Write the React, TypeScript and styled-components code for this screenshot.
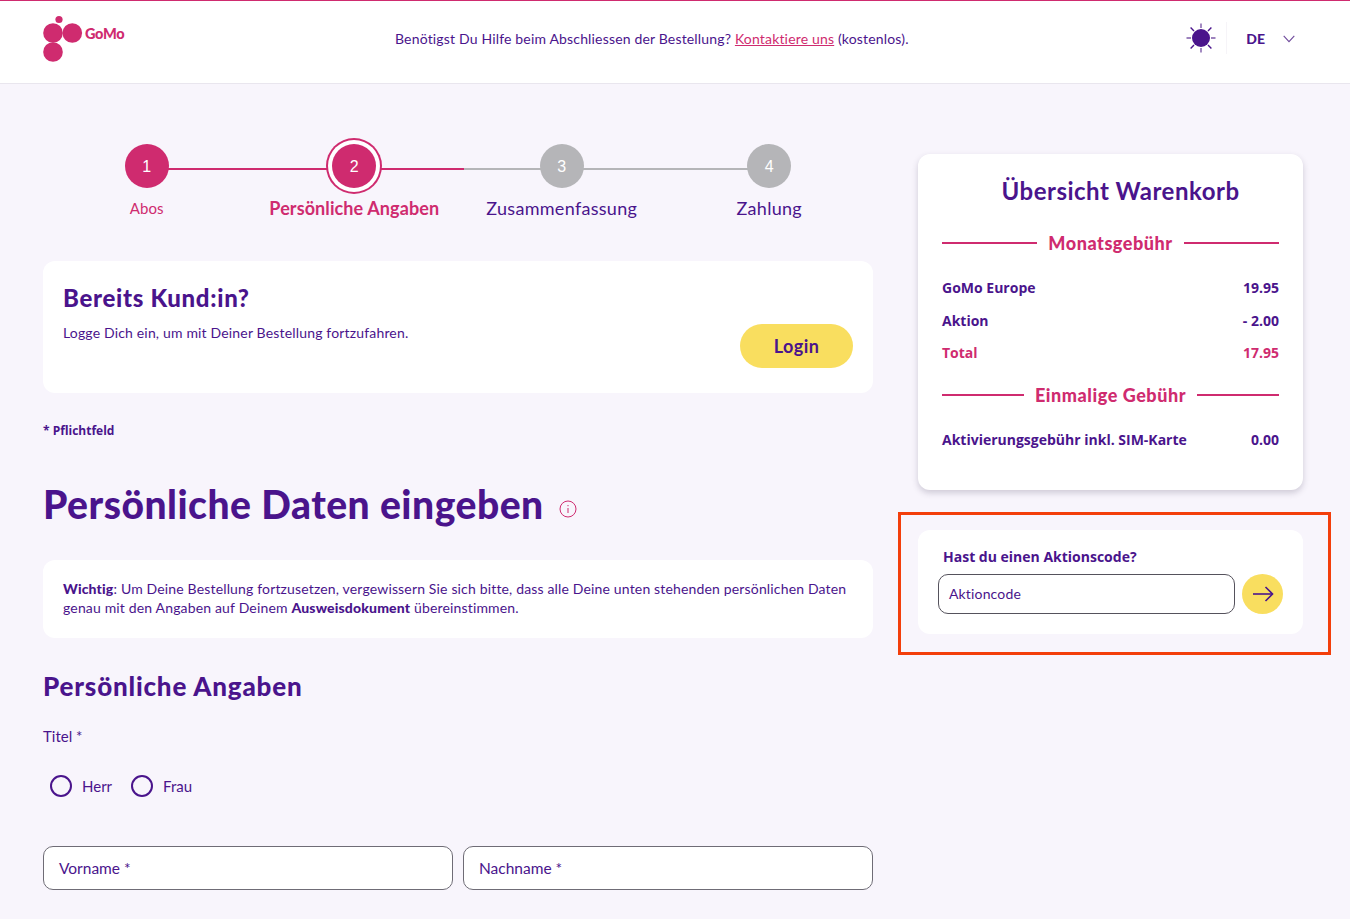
import * as React from "react";
import styled, { createGlobalStyle } from "styled-components";

const PURPLE = "#4a148c";
const PINK = "#cf2b6f";
const YELLOW = "#f9de5f";
const PAGE_BG = "#f8f5fc";
const BODY_FONT = '"Lato", "Liberation Sans", sans-serif';
const ORDER_FONT = '"Open Sans", "Liberation Sans", sans-serif';

const GlobalStyle = createGlobalStyle`
  html, body {
    margin: 0;
    padding: 0;
  }
  body {
    background: ${PAGE_BG};
    color: ${PURPLE};
    font-family: ${BODY_FONT};
  }
  * {
    box-sizing: border-box;
  }
`;

const Page = styled.div`
  height: 919px;
  overflow: hidden;
`;

const Header = styled.header`
  display: flex;
  align-items: center;
  height: 84px;
  padding: 0 55px 8px 43px;
  background: #fff;
  border-top: 1px solid ${PINK};
  border-bottom: 1px solid #e9e6ee;
`;

const LogoWrap = styled.div`
  display: flex;
  align-items: flex-start;
  width: 352px;
  height: 52px;
`;

const LogoText = styled.span`
  margin: 13px 0 0;
  font-size: 14.5px;
  font-weight: 900;
  letter-spacing: -0.3px;
  color: ${PINK};
`;

const HelpText = styled.p`
  margin: 0;
  font-size: 14px;
  letter-spacing: 0.17px;

  a {
    color: ${PINK};
    text-decoration: underline;
  }
`;

const HeaderTools = styled.div`
  display: flex;
  align-items: center;
  margin-left: auto;
`;

const SunBox = styled.div`
  display: flex;
  align-items: center;
  height: 32px;
  padding-right: 10px;
  border-right: 1px solid #f6f4f8;
`;

const LangCode = styled.span`
  margin: 0 18px 0 19px;
  font-size: 14px;
  font-weight: 900;
`;

const ChevronSvg = styled.svg`
  margin-top: 2px;
`;

const Main = styled.main`
  display: grid;
  grid-template-columns: 830px 385px;
  column-gap: 45px;
  padding-left: 43px;
`;

const LeftColumn = styled.div`
  padding-top: 60px;
`;

const RightColumn = styled.aside`
  padding-top: 70px;
`;

const Stepper = styled.ol`
  display: grid;
  grid-template-columns: repeat(4, 1fr);
  height: 117px;
  margin: 0;
  padding: 0;
  list-style: none;
`;

const Step = styled.li<{ $line?: string; $half?: string }>`
  position: relative;
  display: flex;
  flex-direction: column;
  align-items: center;

  &::before {
    content: "";
    display: ${(p) => (p.$line ? "block" : "none")};
    position: absolute;
    top: 24px;
    left: 50%;
    width: 100%;
    height: 2px;
    background: ${(p) =>
      p.$half
        ? `linear-gradient(to right, ${p.$half} 53%, ${p.$line} 53%)`
        : p.$line};
  }
`;

const StepCircle = styled.div<{ $state: "done" | "active" | "todo" }>`
  position: relative;
  z-index: 1;
  display: flex;
  align-items: center;
  justify-content: center;
  width: 44px;
  height: 44px;
  padding-top: 2px;
  border-radius: 50%;
  font-family: "Liberation Sans", sans-serif;
  font-size: 16px;
  color: #fff;
  background: ${(p) => (p.$state === "todo" ? "#b5b5b8" : PINK)};
  box-shadow: ${(p) =>
    p.$state === "active" ? `0 0 0 4px #fff, 0 0 0 6px ${PINK}` : "none"};
`;

const StepLabel = styled.span<{ $small?: boolean; $color?: string; $bold?: boolean }>`
  margin-top: ${(p) => (p.$small ? "11px" : "9px")};
  font-size: ${(p) => (p.$small ? "15px" : "18px")};
  font-weight: ${(p) => (p.$bold ? 700 : 400)};
  letter-spacing: ${(p) => (p.$bold || p.$small ? "0.1px" : "0.3px")};
  color: ${(p) => p.$color || PURPLE};
  white-space: nowrap;
`;

const Card = styled.section`
  background: #fff;
  border-radius: 12px;
`;

const LoginCard = styled(Card)`
  display: flex;
  justify-content: space-between;
  height: 132px;
  padding: 22px 20px 0;
`;

const CardTitle = styled.h3`
  margin: 0 0 12px;
  font-size: 24px;
  font-weight: 900;
  letter-spacing: 0.7px;
`;

const CardText = styled.p`
  margin: 0;
  font-size: 14px;
  letter-spacing: 0.17px;
`;

const LoginButton = styled.button`
  align-self: flex-start;
  width: 113px;
  height: 44px;
  margin-top: 41px;
  border: 0;
  border-radius: 22px;
  background: ${YELLOW};
  color: ${PURPLE};
  font-family: ${BODY_FONT};
  font-size: 18px;
  font-weight: 700;
  letter-spacing: 0.4px;
`;

const Required = styled.p`
  margin: 29px 0 0;
  font-family: ${ORDER_FONT};
  font-size: 12px;
  font-weight: 700;
`;

const TitleRow = styled.div`
  display: flex;
  align-items: center;
  gap: 15px;
  margin-top: 40px;
`;

const PageTitle = styled.h1`
  margin: 0;
  font-size: 39px;
  line-height: 50px;
  font-weight: 900;
  letter-spacing: 0.5px;
`;

const InfoSvg = styled.svg`
  margin-top: 10px;
`;

const NoticeCard = styled(Card)`
  height: 78px;
  margin-top: 31px;
  padding: 19px 20px 0;
  font-size: 14px;
  line-height: 19px;
  letter-spacing: 0.16px;

  b {
    font-weight: 900;
  }
`;

const SectionTitle = styled.h2`
  margin: 32px 0 0;
  font-size: 26px;
  line-height: 32px;
  font-weight: 900;
  letter-spacing: 0.8px;
`;

const FieldLabel = styled.div`
  margin-top: 24px;
  font-size: 15px;
  line-height: 20px;
`;

const RadioRow = styled.div`
  display: flex;
  align-items: center;
  gap: 19px;
  margin: 29px 0 0 7px;
`;

const RadioLabel = styled.label`
  display: flex;
  align-items: center;
  gap: 10px;
  font-size: 15px;
`;

const RadioDot = styled.span`
  width: 22px;
  height: 22px;
  border: 2px solid ${PURPLE};
  border-radius: 50%;
`;

const NameRow = styled.div`
  display: grid;
  grid-template-columns: 410px 410px;
  column-gap: 10px;
  margin-top: 49px;
`;

const TextBox = styled.div`
  display: flex;
  align-items: center;
  height: 44px;
  padding-left: 15px;
  background: #fff;
  border: 1px solid #6f6c76;
  border-radius: 10px;
  font-size: 15.5px;
`;

const CartCard = styled(Card)`
  height: 336px;
  padding: 0 24px;
  box-shadow: 0 3px 6px rgba(60, 50, 80, 0.22);
`;

const CartTitle = styled.h2`
  margin: 0;
  padding-top: 21px;
  font-size: 24px;
  line-height: 32px;
  font-weight: 700;
  text-align: center;
  letter-spacing: 0.5px;
  transform: translateX(10px);
`;

const FeeDivider = styled.div<{ $top: number; $bottom: number }>`
  display: flex;
  align-items: center;
  gap: 11px;
  margin: ${(p) => p.$top}px 0 ${(p) => p.$bottom}px;
  font-size: 18px;
  line-height: 24px;
  font-weight: 900;
  letter-spacing: 0.55px;
  color: ${PINK};

  &::before,
  &::after {
    content: "";
    flex: 1;
    height: 2px;
    background: ${PINK};
  }
`;

const PriceRow = styled.div<{ $pink?: boolean }>`
  display: flex;
  justify-content: space-between;
  height: 32.5px;
  font-family: ${ORDER_FONT};
  font-size: 14px;
  line-height: 20px;
  font-weight: 700;
  color: ${(p) => (p.$pink ? PINK : PURPLE)};
`;

const PromoCard = styled(Card)`
  position: relative;
  height: 104px;
  margin-top: 40px;
  padding: 18px 20px 0;

  &::after {
    content: "";
    position: absolute;
    inset: -18px -28px -21px -20px;
    border: 3.5px solid #f33e0b;
    pointer-events: none;
  }
`;

const PromoLabel = styled.div`
  margin-left: 5px;
  font-family: ${ORDER_FONT};
  font-size: 14px;
  line-height: 18px;
  font-weight: 700;
`;

const PromoRow = styled.div`
  display: flex;
  gap: 7px;
  margin-top: 8px;
`;

const PromoInput = styled.div`
  display: flex;
  align-items: center;
  flex: 1;
  height: 40px;
  padding: 0 0 2px 10px;
  background: #fff;
  border: 1px solid #55525c;
  border-radius: 10px;
  font-size: 14px;
  letter-spacing: 0.15px;
`;

const PromoButton = styled.button`
  display: flex;
  align-items: center;
  justify-content: center;
  width: 41px;
  height: 40px;
  padding: 0;
  border: 0;
  border-radius: 50%;
  background: ${YELLOW};
`;

const GoMoMark = () => (
  <svg width="42" height="50" viewBox="0 0 42 50" fill={PINK}>
    <circle cx="10" cy="21" r="9.8" />
    <circle cx="29.3" cy="21" r="9.8" />
    <circle cx="10" cy="40" r="9.8" />
    <circle cx="16" cy="7.5" r="3.6" />
  </svg>
);

const SunIcon = () => (
  <svg width="30" height="30" viewBox="0 0 30 30">
    <g stroke="#7d5aa8" strokeWidth="1.4">
      <path d="M15 0.5V5M15 25V29.5M0.5 15H5M25 15H29.5" />
      <path d="M4.6 4.6L8 8M22 22L25.4 25.4M4.6 25.4L8 22M22 8L25.4 4.6" stroke={PURPLE} />
    </g>
    <circle cx="15" cy="15" r="9" fill={PURPLE} />
  </svg>
);

const Chevron = () => (
  <ChevronSvg width="12" height="8" viewBox="0 0 12 8" fill="none" stroke="#6f4a9c" strokeWidth="1.1">
    <path d="M0.7 0.8L6 6.6L11.3 0.8" />
  </ChevronSvg>
);

const InfoIcon = () => (
  <InfoSvg width="18" height="18" viewBox="0 0 18 18" fill="none" stroke={PINK} strokeWidth="1">
    <circle cx="9" cy="9" r="8" />
    <path d="M9 8V13" />
    <path d="M9 5V6.2" />
  </InfoSvg>
);

const ArrowIcon = () => (
  <svg width="22" height="16" viewBox="0 0 22 16" fill="none" stroke={PURPLE} strokeWidth="1.6">
    <path d="M1 8H20.5" />
    <path d="M13.5 1L20.5 8L13.5 15" />
  </svg>
);

const App = () => (
  <Page>
    <GlobalStyle />
    <Header>
      <LogoWrap>
        <GoMoMark />
        <LogoText>GoMo</LogoText>
      </LogoWrap>
      <HelpText>
        Benötigst Du Hilfe beim Abschliessen der Bestellung? <a href="#">Kontaktiere uns</a>{" "}
        (kostenlos).
      </HelpText>
      <HeaderTools>
        <SunBox>
          <SunIcon />
        </SunBox>
        <LangCode>DE</LangCode>
        <Chevron />
      </HeaderTools>
    </Header>
    <Main>
      <LeftColumn>
        <Stepper>
          <Step $line={PINK}>
            <StepCircle $state="done">1</StepCircle>
            <StepLabel $small $color={PINK}>Abos</StepLabel>
          </Step>
          <Step $line="#b5b5b8" $half={PINK}>
            <StepCircle $state="active">2</StepCircle>
            <StepLabel $color={PINK} $bold>Persönliche Angaben</StepLabel>
          </Step>
          <Step $line="#b5b5b8">
            <StepCircle $state="todo">3</StepCircle>
            <StepLabel>Zusammenfassung</StepLabel>
          </Step>
          <Step>
            <StepCircle $state="todo">4</StepCircle>
            <StepLabel>Zahlung</StepLabel>
          </Step>
        </Stepper>
        <LoginCard>
          <div>
            <CardTitle>Bereits Kund:in?</CardTitle>
            <CardText>Logge Dich ein, um mit Deiner Bestellung fortzufahren.</CardText>
          </div>
          <LoginButton>Login</LoginButton>
        </LoginCard>
        <Required>* Pflichtfeld</Required>
        <TitleRow>
          <PageTitle>Persönliche Daten eingeben</PageTitle>
          <InfoIcon />
        </TitleRow>
        <NoticeCard>
          <b>Wichtig</b>: Um Deine Bestellung fortzusetzen, vergewissern Sie sich bitte, dass alle
          Deine unten stehenden persönlichen Daten
          <br />
          genau mit den Angaben auf Deinem <b>Ausweisdokument</b> übereinstimmen.
        </NoticeCard>
        <SectionTitle>Persönliche Angaben</SectionTitle>
        <FieldLabel>Titel *</FieldLabel>
        <RadioRow>
          <RadioLabel>
            <RadioDot />
            Herr
          </RadioLabel>
          <RadioLabel>
            <RadioDot />
            Frau
          </RadioLabel>
        </RadioRow>
        <NameRow>
          <TextBox>Vorname *</TextBox>
          <TextBox>Nachname *</TextBox>
        </NameRow>
      </LeftColumn>
      <RightColumn>
        <CartCard>
          <CartTitle>Übersicht Warenkorb</CartTitle>
          <FeeDivider $top={24} $bottom={23}>Monatsgebühr</FeeDivider>
          <PriceRow>
            <span>GoMo Europe</span>
            <span>19.95</span>
          </PriceRow>
          <PriceRow>
            <span>Aktion</span>
            <span>- 2.00</span>
          </PriceRow>
          <PriceRow $pink>
            <span>Total</span>
            <span>17.95</span>
          </PriceRow>
          <FeeDivider $top={7} $bottom={23}>Einmalige Gebühr</FeeDivider>
          <PriceRow>
            <span>Aktivierungsgebühr inkl. SIM-Karte</span>
            <span>0.00</span>
          </PriceRow>
        </CartCard>
        <PromoCard>
          <PromoLabel>Hast du einen Aktionscode?</PromoLabel>
          <PromoRow>
            <PromoInput>Aktioncode</PromoInput>
            <PromoButton>
              <ArrowIcon />
            </PromoButton>
          </PromoRow>
        </PromoCard>
      </RightColumn>
    </Main>
  </Page>
);

export default App;
